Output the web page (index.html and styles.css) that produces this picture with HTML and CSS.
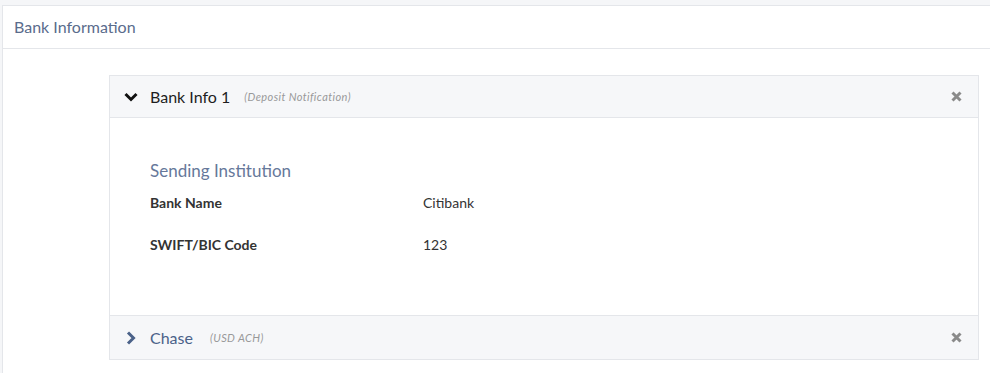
FILE: index.html
```html
<!DOCTYPE html>
<html lang="en">

<head>
    <meta charset="UTF-8">
    <meta name="viewport" content="width=device-width, initial-scale=1.0">
    <title>Bank Information</title>
    <link rel="stylesheet" href="styles.css">
</head>

<body>
    <div class="panel">
        <div class="panel-header">Bank Information</div>

        <div class="panel-body">
            <div class="accordion">
                <div class="acc-item open">
                    <div class="acc-header">
                        <svg class="chevron" width="14" height="14" viewBox="0 0 14 14">
                            <path d="M1.5 4 L7 9.5 L12.5 4" fill="none" stroke="#111" stroke-width="3" />
                        </svg>
                        <span class="acc-title">Bank Info 1</span>
                        <span class="acc-note">(Deposit Notification)</span>
                        <svg class="remove" width="11" height="11" viewBox="0 0 11 11">
                            <path d="M1.5 1.5 L9.5 9.5 M9.5 1.5 L1.5 9.5" stroke="#8a8a8a" stroke-width="3" />
                        </svg>
                    </div>
                    <div class="acc-body">
                        <h3>Sending Institution</h3>
                        <div class="field">
                            <div class="label">Bank Name</div>
                            <div class="value">Citibank</div>
                        </div>
                        <div class="field">
                            <div class="label">SWIFT/BIC Code</div>
                            <div class="value">123</div>
                        </div>
                    </div>
                </div>

                <div class="acc-item">
                    <div class="acc-header">
                        <svg class="chevron" width="14" height="14" viewBox="0 0 14 14">
                            <path d="M4 1.5 L9.5 7 L4 12.5" fill="none" stroke="#4b6289" stroke-width="3" />
                        </svg>
                        <span class="acc-title closed">Chase</span>
                        <span class="acc-note">(USD ACH)</span>
                        <svg class="remove" width="11" height="11" viewBox="0 0 11 11">
                            <path d="M1.5 1.5 L9.5 9.5 M9.5 1.5 L1.5 9.5" stroke="#8a8a8a" stroke-width="3" />
                        </svg>
                    </div>
                </div>
            </div>
        </div>
    </div>
</body>

</html>
```

FILE: styles.css
```css
body {
    margin: 0;
    font-family: 'Lato', 'Open Sans', sans-serif;
    background-color: #f5f6f8;
    color: #333;
    overflow: hidden;
}

.panel {
    margin: 5px 0 0 2px;
    width: 1010px;
    background-color: white;
    border: 1px solid #e4e6ea;
}

.panel-header {
    height: 42px;
    line-height: 41px;
    padding-left: 11px;
    font-size: 16px;
    color: #5a6c8c;
    border-bottom: 1px solid #e4e6ea;
}

.panel-body {
    padding: 26px 0 40px 106px;
}

.accordion {
    width: 868px;
    border: 1px solid #e4e6ea;
}

.acc-header {
    display: flex;
    align-items: center;
    box-sizing: border-box;
    height: 42px;
    padding: 0 16px 0 14px;
    background-color: #f6f7f9;
}

.acc-item + .acc-item .acc-header {
    height: 44px;
    border-top: 1px solid #e4e6ea;
}

.open .acc-header {
    border-bottom: 1px solid #e4e6ea;
}

.chevron {
    margin-right: 12px;
}

.acc-title {
    font-size: 16px;
    color: #1e1e1e;
}

.acc-title.closed {
    color: #4b6289;
    margin-right: 3px;
}

.acc-note {
    margin-left: 14px;
    font-size: 11px;
    letter-spacing: 0.4px;
    font-style: italic;
    color: #999;
}

.remove {
    margin-left: auto;
}

.acc-body {
    height: 197px;
    padding: 0 40px;
    box-sizing: border-box;
    padding-top: 42px;
}

h3 {
    margin: 0 0 12px;
    font-size: 17px;
    font-weight: normal;
    color: #66789a;
}

.field {
    display: flex;
    height: 42px;
    font-size: 14px;
    line-height: 20px;
}

.label {
    width: 273px;
    font-weight: bold;
}
```
